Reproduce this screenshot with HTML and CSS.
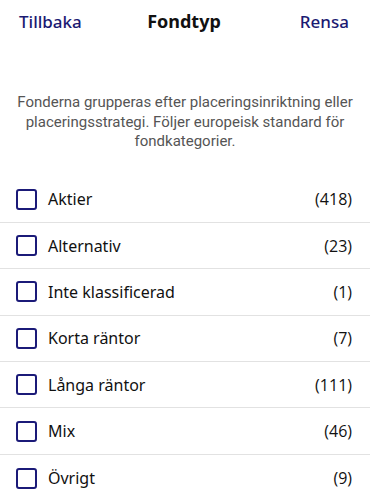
FILE: index.html
```html
<!DOCTYPE html>
<html lang="sv">
<head>
<meta charset="utf-8">
<link rel="stylesheet" href="styles.css">
</head>
<body>
<header class="topbar">
  <span class="link back">Tillbaka</span>
  <span class="title">Fondtyp</span>
  <span class="link clear">Rensa</span>
</header>
<p class="desc">Fonderna grupperas efter placeringsinriktning eller placeringsstrategi. Följer europeisk standard för fondkategorier.</p>
<ul class="list">
  <li class="row"><span class="box"></span><span class="label">Aktier</span><span class="count">(418)</span></li>
  <li class="row"><span class="box"></span><span class="label">Alternativ</span><span class="count">(23)</span></li>
  <li class="row"><span class="box"></span><span class="label">Inte klassificerad</span><span class="count">(1)</span></li>
  <li class="row"><span class="box"></span><span class="label">Korta räntor</span><span class="count">(7)</span></li>
  <li class="row"><span class="box"></span><span class="label">Långa räntor</span><span class="count">(111)</span></li>
  <li class="row"><span class="box"></span><span class="label">Mix</span><span class="count">(46)</span></li>
  <li class="row"><span class="box"></span><span class="label">Övrigt</span><span class="count">(9)</span></li>
</ul>
</body>
</html>
```
FILE: styles.css
```css
html, body {
  margin: 0;
  padding: 0;
  background: #fff;
}
body {
  font-family: "Noto Sans", "Open Sans", sans-serif;
  color: #111;
}
.topbar {
  display: grid;
  grid-template-columns: 1fr auto 1fr;
  align-items: center;
  height: 42px;
  padding: 0 21px 0 19px;
}
.link {
  color: #1b1a72;
  font-size: 17px;
  font-weight: 500;
}
.clear {
  justify-self: end;
}
.title {
  font-size: 18px;
  font-weight: 700;
  color: #111;
}
.desc {
  margin: 51px 16px 0;
  text-align: center;
  color: #555;
  font-family: Roboto, "Noto Sans", sans-serif;
  font-size: 15px;
  line-height: 19.5px;
}
.list {
  list-style: none;
  margin: 25px 0 0;
  padding: 0;
}
.row {
  display: flex;
  align-items: center;
  height: 46.4px;
  box-sizing: border-box;
  padding: 0 18px 0 16px;
  border-bottom: 1.5px solid #e2e2e2;
}
.row:last-child {
  border-bottom: none;
}
.box {
  width: 21px;
  height: 21px;
  box-sizing: border-box;
  border: 2px solid #1b1a78;
  border-radius: 3px;
  margin-right: 11px;
  flex: none;
}
.label {
  flex: 1;
  font-size: 16px;
}
.count {
  font-size: 16px;
  font-family: "Open Sans", sans-serif;
}
```
